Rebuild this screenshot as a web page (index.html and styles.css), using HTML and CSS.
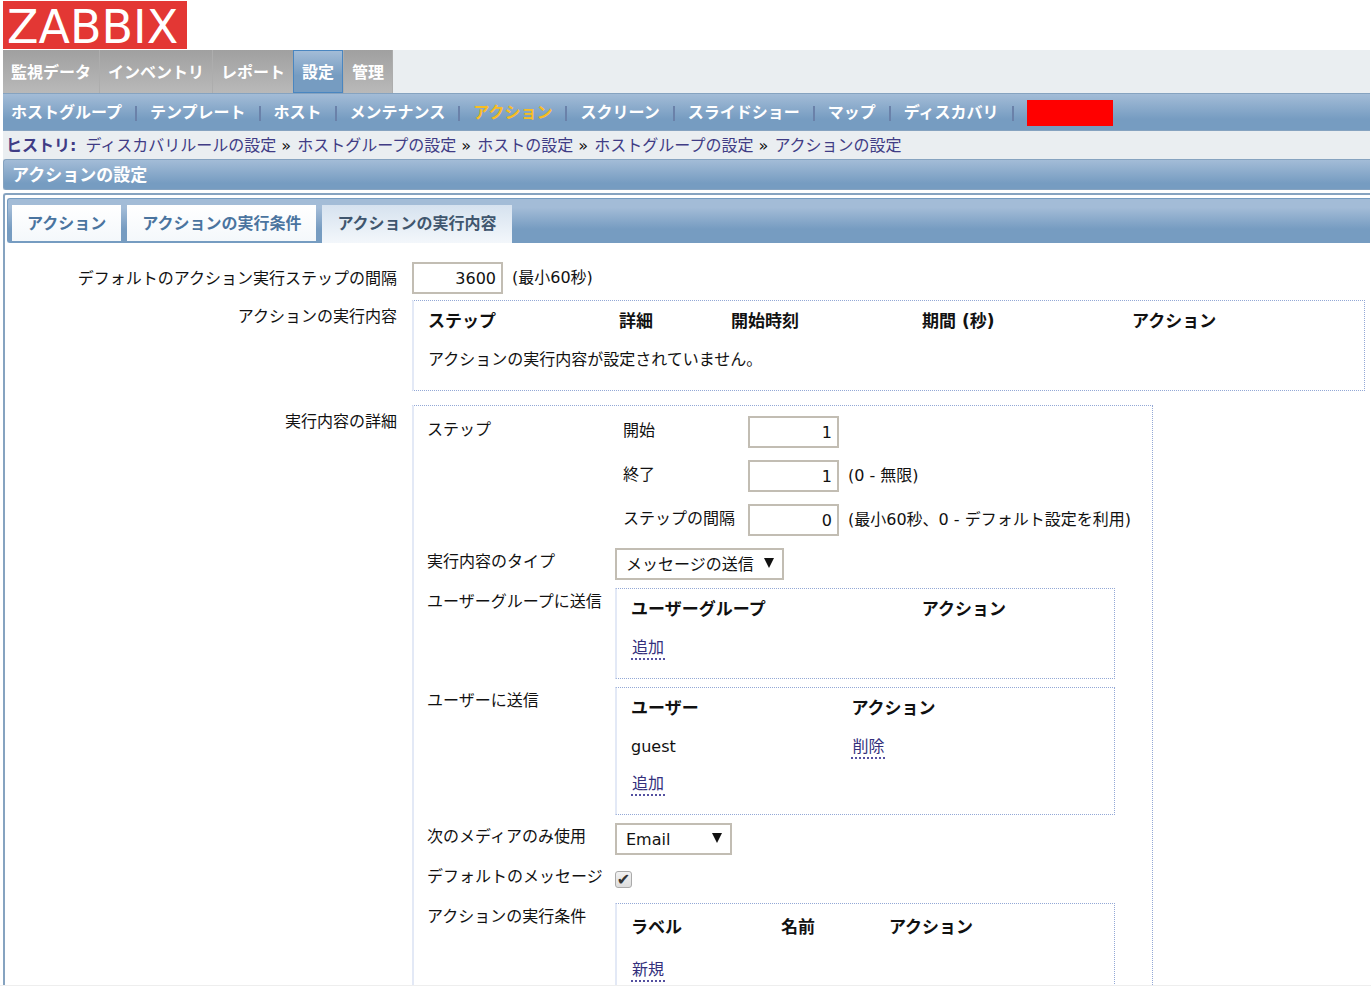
FILE: index.html
```html
<!DOCTYPE html>
<html lang="ja">
<head>
	<meta charset="UTF-8">
	<meta name="viewport" content="width=device-width, initial-scale=1">
	<title>アクションの設定</title>
	<link rel="stylesheet" href="styles.css">
</head>
<body>
	<div class="page">
		<header class="header">
			<a class="logo" href="#">ZABBIX</a>
			<nav class="menu">
				<a href="#">監視データ</a>
				<a href="#">インベントリ</a>
				<a href="#">レポート</a>
				<a href="#" class="on">設定</a>
				<a href="#">管理</a>
			</nav>
			<nav class="submenu">
				<a href="#">ホストグループ</a>
				<a href="#">テンプレート</a>
				<a href="#">ホスト</a>
				<a href="#">メンテナンス</a>
				<a href="#" class="on">アクション</a>
				<a href="#">スクリーン</a>
				<a href="#">スライドショー</a>
				<a href="#">マップ</a>
				<a href="#">ディスカバリ</a>
				<span class="mask"></span>
			</nav>
			<div class="history">
				<b>ヒストリ:</b>
				<a href="#">ディスカバリルールの設定</a><i>»</i>
				<a href="#">ホストグループの設定</a><i>»</i>
				<a href="#">ホストの設定</a><i>»</i>
				<a href="#">ホストグループの設定</a><i>»</i>
				<a href="#">アクションの設定</a>
			</div>
			<h1 class="title">アクションの設定</h1>
		</header>

		<main class="panel">
			<div class="tabs">
				<a href="#">アクション</a>
				<a href="#">アクションの実行条件</a>
				<a href="#" class="on">アクションの実行内容</a>
			</div>

			<form class="form">
				<label class="label" for="period">デフォルトのアクション実行ステップの間隔</label>
				<div class="field">
					<input class="num" id="period" type="text" value="3600">
					<span>(最小60秒)</span>
				</div>

				<div class="label">アクションの実行内容</div>
				<div class="box">
					<table class="list operations">
						<thead>
							<tr><th>ステップ</th><th>詳細</th><th>開始時刻</th><th>期間 (秒)</th><th>アクション</th></tr>
						</thead>
						<tbody>
							<tr><td colspan="5">アクションの実行内容が設定されていません。</td></tr>
						</tbody>
					</table>
				</div>

				<div class="label detail-label">実行内容の詳細</div>
				<div class="box detail">
					<div class="name">ステップ</div>
					<div class="steps">
						<label for="from">開始</label>
						<div class="field"><input class="num" id="from" type="text" value="1"></div>
						<label for="to">終了</label>
						<div class="field"><input class="num" id="to" type="text" value="1"><span>(0 - 無限)</span></div>
						<label for="step">ステップの間隔</label>
						<div class="field"><input class="num" id="step" type="text" value="0"><span>(最小60秒、0 - デフォルト設定を利用)</span></div>
					</div>

					<label class="name" for="type">実行内容のタイプ</label>
					<div class="field">
						<span class="select"><select id="type"><option>メッセージの送信</option></select></span>
					</div>

					<div class="name">ユーザーグループに送信</div>
					<div class="box">
						<table class="list groups">
							<thead><tr><th>ユーザーグループ</th><th>アクション</th></tr></thead>
							<tbody><tr><td colspan="2"><a class="link" href="#">追加</a></td></tr></tbody>
						</table>
					</div>

					<div class="name">ユーザーに送信</div>
					<div class="box">
						<table class="list users">
							<thead><tr><th>ユーザー</th><th>アクション</th></tr></thead>
							<tbody>
								<tr><td>guest</td><td><a class="link" href="#">削除</a></td></tr>
								<tr><td colspan="2"><a class="link" href="#">追加</a></td></tr>
							</tbody>
						</table>
					</div>

					<label class="name" for="media">次のメディアのみ使用</label>
					<div class="field">
						<span class="select short"><select id="media"><option>Email</option></select></span>
					</div>

					<label class="name" for="default">デフォルトのメッセージ</label>
					<div class="field"><input class="check" id="default" type="checkbox" checked></div>

					<div class="name">アクションの実行条件</div>
					<div class="box">
						<table class="list conditions">
							<thead><tr><th>ラベル</th><th>名前</th><th>アクション</th></tr></thead>
							<tbody><tr><td colspan="3"><a class="link" href="#">新規</a></td></tr></tbody>
						</table>
					</div>
				</div>
			</form>
		</main>
	</div>
</body>
</html>
```
FILE: styles.css
```css
* {
	margin:0;
	padding:0;
	box-sizing:border-box;
}
body {
	height:100vh;
	overflow:hidden;
	background:#fff;
	color:#111;
	font:16px/24px "DejaVu Sans", "Noto Sans CJK JP", sans-serif;
}
a {
	color:inherit;
	text-decoration:none;
}
input, select {
	font:inherit;
	color:inherit;
}
.page {
	display:flex;
	flex-direction:column;
	height:calc(100vh - 1px);
	padding:1px 1px 0 3px;
	overflow:hidden;
	border-bottom:1px solid #eee;
}
.header {
	flex:none;
	background:linear-gradient(#fff 49px, #eaeef1 49px);
}

/* logo */
.logo {
	display:block;
	width:184px;
	height:48px;
	padding-left:4px;
	background:#e33734;
	color:#fff;
	font-size:46px;
	line-height:52px;
}

/* main menu */
.menu {
	display:flex;
	gap:1px;
	height:43px;
	margin-top:1px;
}
.menu a {
	padding:0 8px;
	background:linear-gradient(#a0a0a0, #b9b9b9);
	color:#fff;
	font-weight:bold;
	line-height:45px;
	box-shadow:1px 0 0 #adadad;
}
.menu .on {
	margin-left:-1px;
	border:1px solid #4a86c0;
	background:linear-gradient(#a3bcd7, #769cc1 60%);
	line-height:43px;
}
.submenu {
	display:flex;
	align-items:center;
	height:38px;
	padding:2px 0 0 8px;
	border:solid #86a3c0;
	border-width:1px 0;
	background:linear-gradient(#a3bcd7, #769cc1 70%);
	color:#fff;
	font-weight:bold;
}
.submenu a {
	display:flex;
	align-items:center;
}
.submenu a::after {
	content:"";
	width:2px;
	height:15px;
	margin:0 13px;
	background:#6a81a9;
}
.submenu .on {
	color:#f8bd22;
}
.mask {
	width:86px;
	height:26px;
	background:#f00;
}
.history {
	display:flex;
	height:28px;
	padding-left:3px;
	color:#403c85;
	line-height:30px;
}
.history b {
	margin-right:9px;
}
.history i {
	width:11px;
	margin:0 5px;
	color:#111;
	font-style:normal;
}
.title {
	height:31px;
	padding-left:8px;
	border:1px solid #86a3c0;
	border-right:0;
	border-radius:3px 0 0 3px;
	background:linear-gradient(#a3bcd7, #769cc1 80%);
	color:#fff;
	font-size:17px;
	line-height:30px;
}

/* tabs */
.panel {
	flex:1;
	margin-top:3px;
	padding:3px 0 0 2px;
	border:solid #86a3c0;
	border-width:2px 0 0 2px;
	border-radius:3px 0 0 0;
}
.tabs {
	display:flex;
	gap:6px;
	height:45px;
	padding:6px 0 0 4px;
	border:1px solid #769cc1;
	border-right:0;
	border-radius:3px 0 0 3px;
	background:linear-gradient(#a3bcd7 20%, #769cc1 70%);
}
.tabs a {
	height:36px;
	padding:0 15px;
	background:linear-gradient(#fff, #f4f8fb);
	color:#4a749f;
	font-weight:bold;
	line-height:38px;
}
.tabs .on {
	height:38px;
	background:linear-gradient(#d6e2ef, #f3f7fb);
	color:#40566e;
}

/* form */
.form {
	display:grid;
	grid-template-columns:390px 1fr;
	column-gap:15px;
	padding:19px 5px 0 0;
}
.label {
	line-height:34px;
	text-align:right;
}
.field {
	display:flex;
	align-items:center;
	gap:9px;
	min-height:32px;
}
.form > .field {
	margin-bottom:6px;
}
.num {
	width:91px;
	height:32px;
	padding:0 5px;
	border:2px solid #c2bdb3;
	background:#fff;
	text-align:right;
}
.box {
	padding:3px 14px 12px 14px;
	border:1px dotted #93a8d6;
	border-left:2px solid #e3e9f6;
}
.detail {
	display:grid;
	grid-template-columns:188px 1fr;
	row-gap:8px;
	width:741px;
	margin-top:14px;
	padding:10px 37px 12px 13px;
}
.detail-label {
	margin-top:14px;
}
.name {
	line-height:28px;
}
.steps {
	display:grid;
	grid-template-columns:125px auto;
	row-gap:12px;
	margin:0 -30px 4px 0;
	padding-left:8px;
	white-space:nowrap;
}
.steps label {
	line-height:30px;
}
.select {
	position:relative;
	width:169px;
}
.short {
	width:117px;
}
.select select {
	display:block;
	width:100%;
	height:32px;
	padding:1px 8px 0 9px;
	border:2px solid #c2bdb3;
	border-radius:0;
	background:#fff;
	-webkit-appearance:none;
	appearance:none;
}
.select::after {
	content:"";
	position:absolute;
	top:10px;
	right:10px;
	border:solid transparent;
	border-width:10px 5px 0 5px;
	border-top-color:#111;
	pointer-events:none;
}
.check {
	display:flex;
	align-items:center;
	justify-content:center;
	width:17px;
	height:17px;
	border:1px solid #aaa;
	border-radius:3px;
	background:linear-gradient(#f2f2f2, #ddd);
	-webkit-appearance:none;
	appearance:none;
}
.check:checked::after {
	content:"✔";
	color:#333;
	font-size:16px;
	line-height:15px;
}

/* lists */
.list {
	width:100%;
	border-collapse:collapse;
	table-layout:fixed;
}
.list th, .list td {
	height:37px;
	text-align:left;
	vertical-align:middle;
}
.list th {
	padding-bottom:3px;
	font-size:17px;
}
.operations th:nth-child(1), .operations th:nth-child(3) {
	width:191px;
}
.operations th:nth-child(2) {
	width:112px;
}
.operations th:nth-child(4) {
	width:210px;
}
.groups th:first-child {
	width:62%;
}
.users th:first-child {
	width:47%;
}
.list.conditions th, .list.conditions td {
	height:42px;
}
.conditions th:nth-child(1) {
	width:32%;
}
.conditions th:nth-child(2) {
	width:23%;
}
.link {
	padding:0 1px 1px 1px;
	border-bottom:2px dotted #5450a0;
	color:#34307c;
}
```
